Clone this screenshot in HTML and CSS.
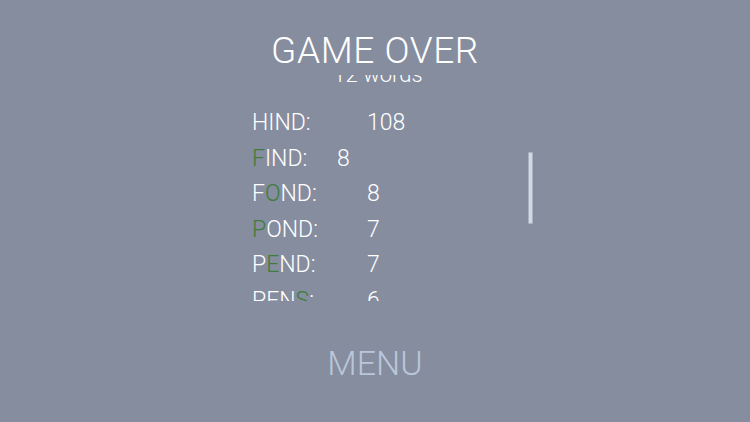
FILE: index.html
```html
<!DOCTYPE html>
<html>
<head>
<meta charset="utf-8">
<link rel="stylesheet" href="styles.css">
</head>
<body>
<div class="screen">
  <h1 class="title">GAME OVER</h1>
  <div class="scroller">
    <div class="content">
      <div class="count">12 words</div>
      <div class="row"><span class="word">HIND:</span><span class="score">108</span></div>
      <div class="row"><span class="word near"><span class="hl">F</span>IND:</span><span class="score">8</span></div>
      <div class="row"><span class="word">F<span class="hl">O</span>ND:</span><span class="score">8</span></div>
      <div class="row"><span class="word"><span class="hl">P</span>OND:</span><span class="score">7</span></div>
      <div class="row"><span class="word">P<span class="hl">E</span>ND:</span><span class="score">7</span></div>
      <div class="row"><span class="word">PEN<span class="hl">S</span>:</span><span class="score">6</span></div>
    </div>
    <div class="thumb"></div>
  </div>
  <div class="menu">MENU</div>
</div>
</body>
</html>
```
FILE: styles.css
```css
html, body {
  margin: 0;
  padding: 0;
  background: #868d9f;
}
.screen {
  width: 750px;
  height: 422px;
  overflow: hidden;
  display: flex;
  flex-direction: column;
  align-items: center;
  padding-top: 32px;
  box-sizing: border-box;
  font-family: Roboto, "Liberation Sans", sans-serif;
  font-weight: 300;
  color: #ffffff;
}
.title {
  margin: 0;
  font-size: 37px;
  line-height: 37px;
  font-weight: 300;
  letter-spacing: 0.6px;
}
.scroller {
  position: relative;
  margin-top: 6px;
  width: 320px;
  height: 226px;
  overflow: hidden;
}
.content {
  margin-top: -15px;
  display: flex;
  flex-direction: column;
}
.count {
  font-size: 22px;
  line-height: 30px;
  text-align: center;
  padding-left: 6px;
  margin-bottom: 15px;
}
.row {
  padding-left: 37px;
  font-size: 23px;
  line-height: 35.5px;
  white-space: nowrap;
}
.word {
  display: inline-block;
  width: 115px;
}
.word.near {
  width: 85px;
}
.hl {
  color: #3f7d3b;
}
.thumb {
  position: absolute;
  left: 313px;
  top: 77px;
  width: 3px;
  height: 70px;
  background: #d3d9e3;
  border: 0.5px solid #aab2c2;
  border-radius: 1px;
}
.menu {
  margin-top: 45px;
  font-size: 34px;
  line-height: 34px;
  color: #b9c7da;
  font-weight: 300;
}
```
